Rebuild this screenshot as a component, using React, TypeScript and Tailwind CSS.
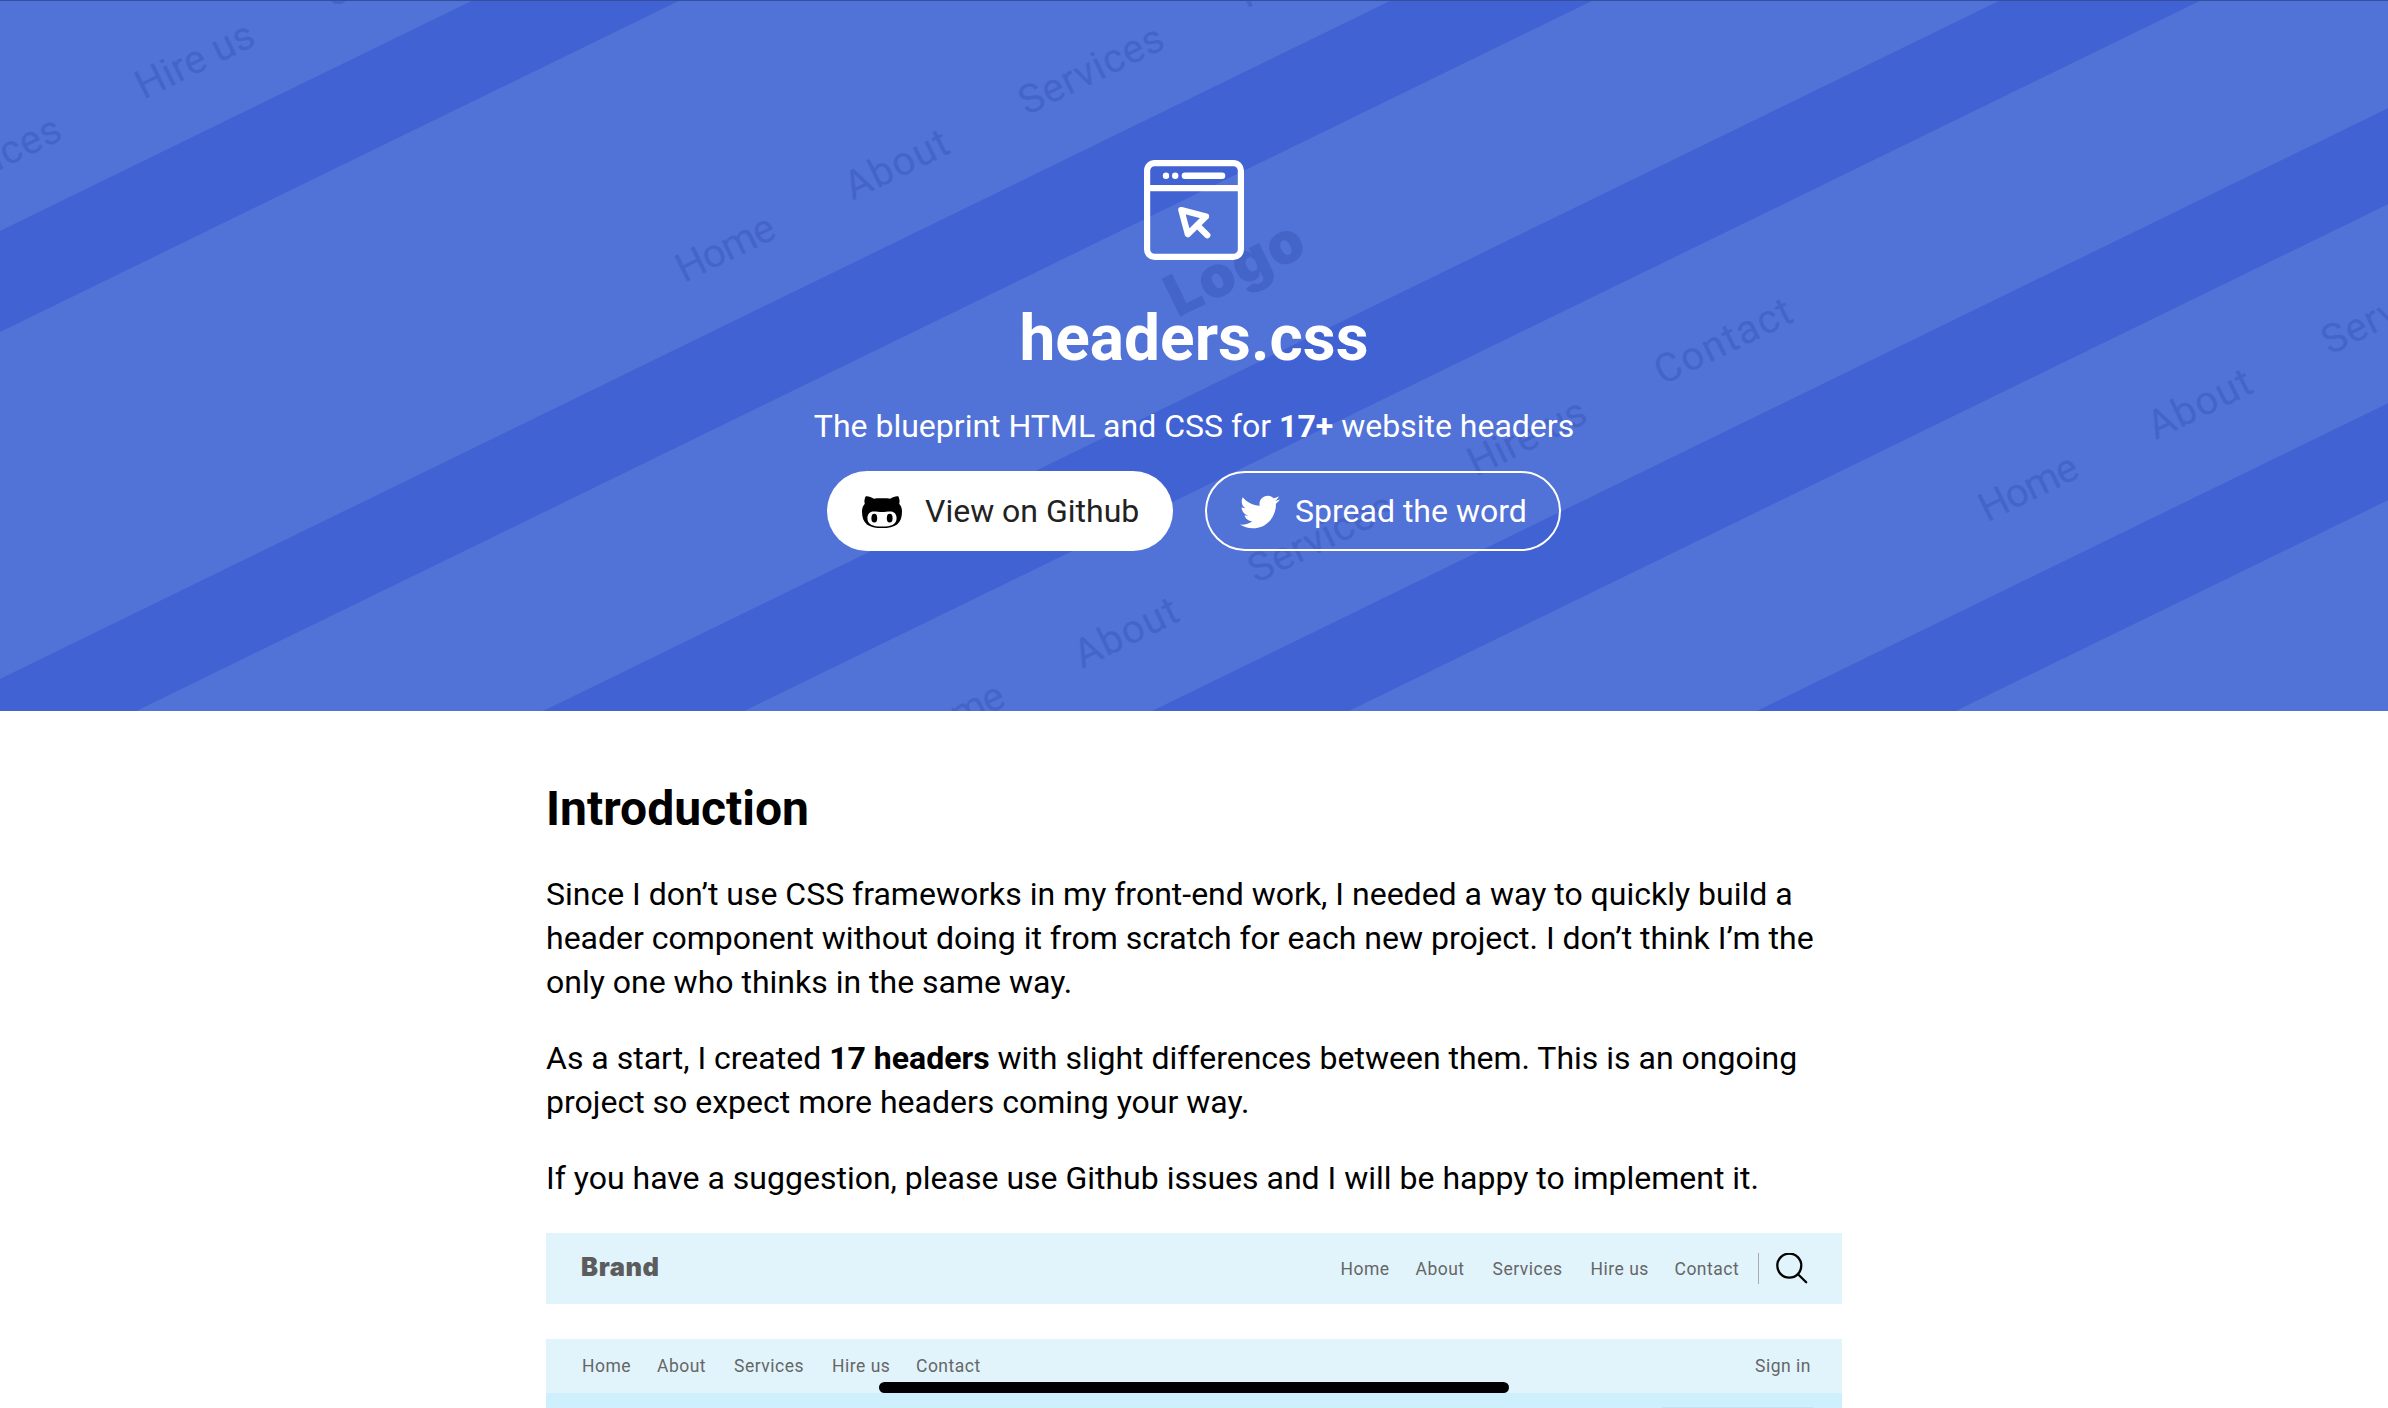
import React from "react";
import { FaTwitter } from "react-icons/fa";

/* Vertical start and thickness of each dark stripe, measured at x = 0. */
const stripes = [
  [231, 332],
  [679, 777.5],
  [976, 1074],
  [1273, 1369],
  [1568, 1665],
];
const SLOPE = 0.4878;
const RUN = 2388 * SLOPE;

const rows = [
  [-414.6, 372],
  [688, 281],
  [917.5, 749],
  [1991, 520.5],
];

function HeroPattern() {
  return (
    <svg className="absolute inset-0 h-full w-full" viewBox="0 0 2388 711" preserveAspectRatio="none" aria-hidden="true">
      {stripes.map(([a, b]) => (
        <polygon key={a} fill="#4162d2" points={`0,${a} 2388,${a - RUN} 2388,${b - RUN} 0,${b}`} />
      ))}
      <g fill="#4564c8" fontFamily="Roboto, sans-serif" fontSize="40">
        {rows.map(([x, y]) => (
          <g key={x} transform={`translate(${x} ${y}) rotate(-26)`}>
            <text x="-4.5" textLength="105">Home</text>
            <text x="183" textLength="111">About</text>
            <text x="377" textLength="156">Services</text>
            <text x="621" textLength="127">Hire us</text>
            <text x="829" textLength="148">Contact</text>
          </g>
        ))}
        <text transform="translate(1183.7 315) rotate(-26)" x="-6.5" fontFamily="Inter, sans-serif" fontSize="58" fontWeight="900" textLength="146">
          Logo
        </text>
      </g>
    </svg>
  );
}

function BrowserIcon() {
  return (
    <svg className="h-[100px] w-[100px]" viewBox="0 0 100 100" fill="none" stroke="#fff" strokeWidth="6.2" strokeLinecap="round" strokeLinejoin="round">
      <rect x="3.1" y="3.1" width="93.8" height="93.8" rx="7.5" />
      <path d="M3 28.2H97" />
      <path d="M41 15.7H78" strokeWidth="6.6" />
      <circle cx="22" cy="15.7" r="3.2" fill="#fff" stroke="none" />
      <circle cx="31.2" cy="15.7" r="3.2" fill="#fff" stroke="none" />
      <path d="M37.3 50L62 56.6L43.8 74.2Z M53.5 65.5L63.3 75.3" />
    </svg>
  );
}

function OctofaceIcon() {
  return (
    <svg className="mt-[2px] h-8 w-10" viewBox="0 0 40 32">
      <path
        fill="#000"
        d="M3.6.4C5.5-.2 9.200 .900 11.800 2.700C14.300 2.200 25.700 2.200 28.200 2.700C30.800 .900 34.500-.2 36.400.4C37.900 3.600 37.700 6.300 37.200 7.800C39 9.900 40 12.400 40 15.400C40 27.600 33.500 32 20 32S0 27.600 0 15.400C0 12.400 1 9.900 2.800 7.800C2.300 6.300 2.100 3.600 3.600.4Z"
      />
      <path
        fill="#fff"
        d="M11.500 15.400C15 15.400 17 16 20 16S25 15.400 28.500 15.400C32 15.400 34.600 18 34.600 22C34.600 28.500 29.500 30.600 20 30.600S5.400 28.500 5.400 22C5.400 18 8 15.400 11.500 15.400Z"
      />
      <ellipse cx="12.300" cy="22.200" rx="2.900" ry="4.400" />
      <ellipse cx="27.700" cy="22.200" rx="2.900" ry="4.400" />
    </svg>
  );
}

function SearchIcon() {
  return (
    <svg className="h-8 w-8" viewBox="0 0 32 32" fill="none" stroke="#000" strokeWidth="2.300" strokeLinecap="round">
      <circle cx="13.300" cy="12.600" r="12" />
      <path d="M22 21.300L30.200 29.300" />
    </svg>
  );
}

function Hero() {
  return (
    <header className="relative flex h-[711px] flex-col items-center bg-[#5172d6] pt-[160px] text-white">
      <HeroPattern />
      <div className="absolute inset-x-0 top-0 h-px bg-[#354f9f]" />
      <div className="relative flex flex-col items-center">
        <BrowserIcon />
        <h1 className="mt-[41px] text-[64px] leading-[76px] font-bold">headers.css</h1>
        <p className="mt-[27px] text-[32px] leading-[44px]">
          The blueprint HTML and CSS for <b>17+</b> website headers
        </p>
        <div className="mt-[23px] flex gap-8">
          <a className="flex h-20 w-[346px] items-center rounded-full bg-white pl-[35px] text-[32px] text-[#222]">
            <OctofaceIcon />
            <span className="ml-[23px]">View on Github</span>
          </a>
          <a className="flex h-20 w-[356px] items-center rounded-full border-2 border-white pl-[33px] text-[32px]">
            <FaTwitter className="mt-[2px] h-10 w-10" />
            <span className="ml-[15px]">Spread the word</span>
          </a>
        </div>
      </div>
    </header>
  );
}

function NavLinks() {
  return (
    <>
      <a className="w-[75px]">Home</a>
      <a className="w-[77px]">About</a>
      <a className="w-[98px]">Services</a>
      <a className="w-[84px]">Hire us</a>
      <a className="w-[66.500px]">Contact</a>
    </>
  );
}

export default function App() {
  return (
    <div className="relative h-[1408px] overflow-hidden bg-white font-[Roboto,sans-serif] text-black">
      <Hero />
      <main className="mx-auto w-[1296px] pt-[70px] text-[32px] leading-[44px]">
        <h2 className="text-[48px] leading-[56px] font-bold">Introduction</h2>
        <p className="mt-[35px]">
          Since I don’t use CSS frameworks in my front-end work, I needed a way to quickly build a<br />
          header component without doing it from scratch for each new project. I don’t think I’m the<br />
          only one who thinks in the same way.
        </p>
        <p className="mt-8">
          As a start, I created <b>17 headers</b> with slight differences between them. This is an ongoing<br />
          project so expect more headers coming your way.
        </p>
        <p className="mt-8">If you have a suggestion, please use Github issues and I will be happy to implement it.</p>

        <div className="mt-[33px] flex h-[71px] items-center bg-[#e1f4fc] pl-[35px] text-[17.500px] leading-5 tracking-[0.5px] text-[#666]">
          <span className="mb-[3px] font-[Inter,sans-serif] text-[25.500px] font-black tracking-[0.6px] text-[#5c5c5c]">Brand</span>
          <nav className="ml-auto flex">
            <NavLinks />
          </nav>
          <span className="ml-[17px] h-[31px] w-px bg-[#aaa]" />
          <span className="mr-[34px] ml-[17px]">
            <SearchIcon />
          </span>
        </div>

        <div className="mt-[35px] flex h-[54px] items-center bg-[#e1f4fc] pr-[31px] pl-9 text-[17.500px] leading-5 tracking-[0.5px] text-[#666]">
          <nav className="flex">
            <NavLinks />
          </nav>
          <span className="ml-auto">Sign in</span>
        </div>
        <div className="flex h-[15px] items-end bg-[#ceeffc] pr-[29px]">
          <span className="ml-auto h-px w-[151px] bg-[#c3e3f1]" />
        </div>
      </main>
      <div className="absolute bottom-[15px] left-[879px] h-[11px] w-[630px] rounded-full bg-black" />
    </div>
  );
}
